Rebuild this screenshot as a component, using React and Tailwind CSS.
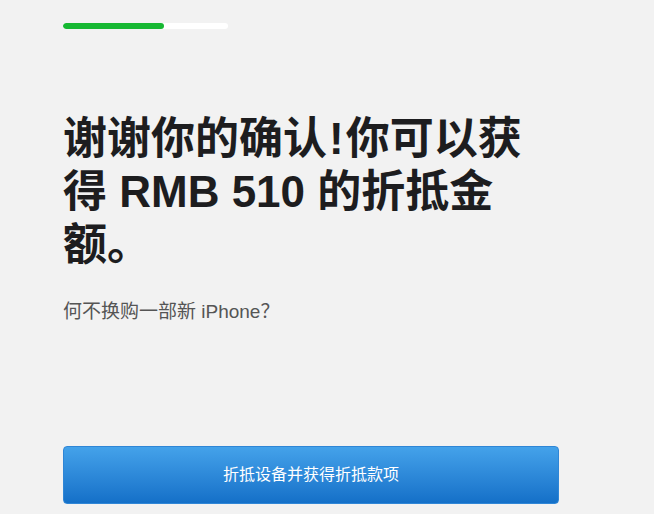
export default function App() {
  return (
    <div
      className="w-[654px] h-[514px] bg-[#f2f2f2] overflow-hidden"
      style={{ fontFamily: '"Liberation Sans", "Noto Sans CJK SC", sans-serif' }}
    >
      <div className="pl-[63px] pt-[23px] w-[559px] box-content">
        {/* progress */}
        <div className="w-[165px] h-[6px] rounded-full bg-white overflow-hidden">
          <div className="w-[101px] h-full rounded-full bg-[#16b832]" />
        </div>

        <h1 className="mt-[83px] w-[464px] text-[44px] leading-[53px] font-bold text-[#1d1d1f]">
          谢谢你的确认<span className="mx-[2px]">!</span>你可以获得 RMB 510 的折抵金额。
        </h1>

        <p className="mt-[28px] text-[19px] leading-[26px] text-[#555]">
          何不换购一部新 iPhone？
        </p>

        <button className="mt-[121px] w-[496px] h-[58px] rounded-[4px] border border-[#2f86d6] bg-gradient-to-b from-[#44a2ea] to-[#1470c8] text-white text-[16px]">
          折抵设备并获得折抵款项
        </button>
      </div>
    </div>
  );
}
